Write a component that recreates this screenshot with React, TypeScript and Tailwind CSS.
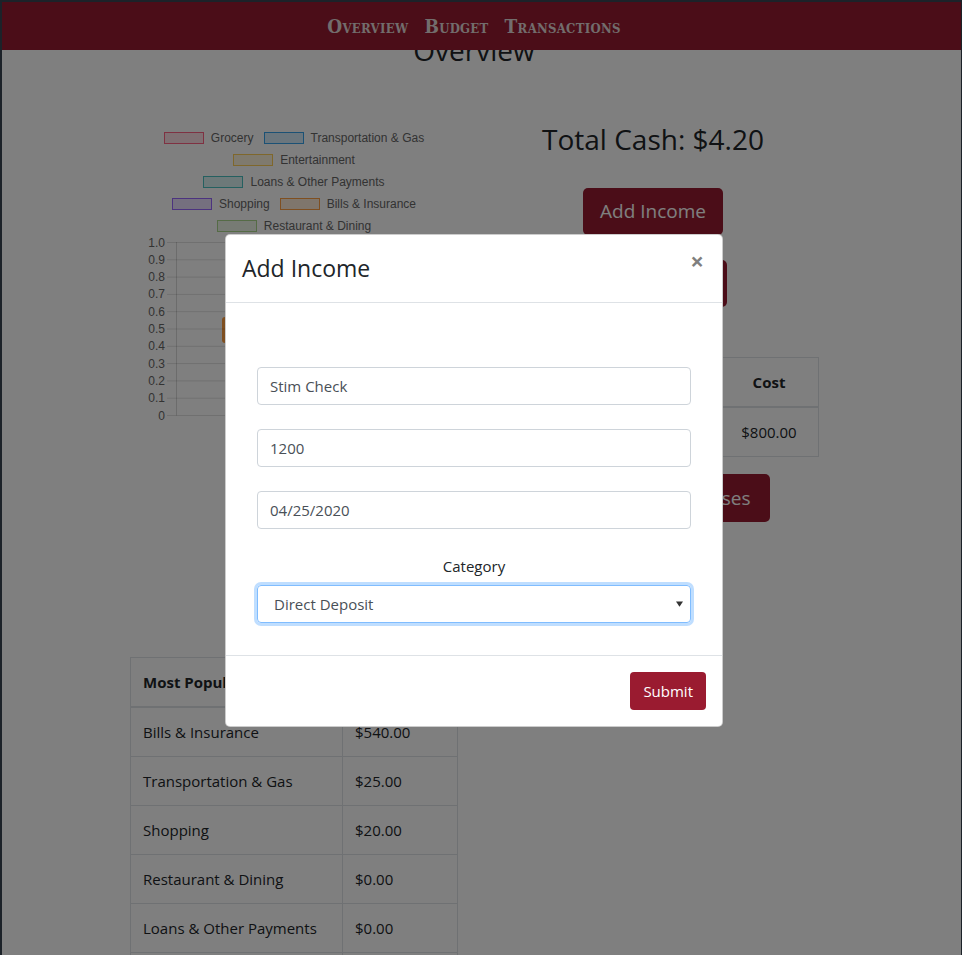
import React from "react";

const legendRows: { label: string; border: string; fill: string }[][] = [
  [
    { label: "Grocery", border: "border-[rgb(255,99,132)]", fill: "bg-[rgba(255,99,132,0.2)]" },
    { label: "Transportation & Gas", border: "border-[rgb(54,162,235)]", fill: "bg-[rgba(54,162,235,0.2)]" },
  ],
  [{ label: "Entertainment", border: "border-[rgb(255,206,86)]", fill: "bg-[rgba(255,206,86,0.2)]" }],
  [{ label: "Loans & Other Payments", border: "border-[rgb(75,192,192)]", fill: "bg-[rgba(75,192,192,0.2)]" }],
  [
    { label: "Shopping", border: "border-[rgb(153,102,255)]", fill: "bg-[rgba(153,102,255,0.2)]" },
    { label: "Bills & Insurance", border: "border-[rgb(255,159,64)]", fill: "bg-[rgba(255,159,64,0.2)]" },
  ],
  [{ label: "Restaurant & Dining", border: "border-[rgb(170,215,140)]", fill: "bg-[rgba(170,215,140,0.2)]" }],
];

const popular = [
  ["Bills & Insurance", "$540.00"],
  ["Transportation & Gas", "$25.00"],
  ["Shopping", "$20.00"],
  ["Restaurant & Dining", "$0.00"],
  ["Loans & Other Payments", "$0.00"],
  ["Entertainment", "$0.00"],
];

function Chart() {
  const labels = ["1.0", "0.9", "0.8", "0.7", "0.6", "0.5", "0.4", "0.3", "0.2", "0.1", "0"];
  return (
    <svg width="328" height="190" viewBox="0 0 328 190" className="block">
      <rect x="92" y="80" width="22" height="26" rx="3" fill="#ff9f40" />
      {labels.map((l, i) => {
        const y = 5.5 + i * 17.3;
        return (
          <g key={l}>
            <line x1="37" x2="328" y1={y} y2={y} stroke="rgba(0,0,0,0.12)" strokeWidth="1" />
            <text
              x="35"
              y={y + 4}
              textAnchor="end"
              fontSize="12"
              fill="#666"
              fontFamily="'Liberation Sans', Arial, sans-serif"
            >
              {l}
            </text>
          </g>
        );
      })}
      <line x1="46.5" x2="46.5" y1="5" y2="178.5" stroke="rgba(0,0,0,0.15)" strokeWidth="1" />
    </svg>
  );
}

export default function App() {
  return (
    <div className="relative h-[955px] w-[962px] overflow-hidden border-t-2 border-l-2 border-r border-[#1c2229] bg-white font-['Open_Sans',sans-serif] text-[#212529]">
      {/* page content */}
      <div className="w-[944px]">
        <h1 className="pt-[31px] text-center text-[28px] leading-[34px] font-normal text-[#212529]">Overview</h1>
        <div className="mt-[43px] flex">
          {/* left column */}
          <div className="ml-[128px] w-[328px] pt-[17px]">
            <div className="flex flex-col items-center font-['Liberation_Sans',Arial,sans-serif] text-[12px] text-[#666]">
              {legendRows.map((row, ri) => (
                <div key={ri} className="flex h-[22px] items-center gap-[10px]">
                  {row.map((it) => (
                    <div key={it.label} className="flex items-center gap-[7px]">
                      <span className={`block h-[12px] w-[40px] border-[1.5px] ${it.border} ${it.fill}`} />
                      <span>{it.label}</span>
                    </div>
                  ))}
                </div>
              ))}
            </div>
            <Chart />
            <table className="mt-[230px] w-[328px] border-collapse text-[15px] leading-[24px]">
              <thead>
                <tr>
                  <th className="w-[212px] border border-b-2 border-[#dee2e6] px-[12px] py-[12px] text-left font-bold whitespace-nowrap">
                    Most Popular Categories
                  </th>
                  <th className="border border-b-2 border-[#dee2e6] px-[12px] py-[12px] text-left font-bold">Total</th>
                </tr>
              </thead>
              <tbody>
                {popular.map(([c, v]) => (
                  <tr key={c}>
                    <td className="border border-[#dee2e6] px-[12px] py-[12px]">{c}</td>
                    <td className="border border-[#dee2e6] px-[12px] py-[12px]">{v}</td>
                  </tr>
                ))}
              </tbody>
            </table>
          </div>
          {/* right column */}
          <div className="flex w-[390px] flex-col items-center pt-[12px]">
            <h2 className="text-[28px] leading-[34px] font-medium">Total Cash: $4.20</h2>
            <button className="mt-[32px] h-[47px] rounded-[5px] bg-[#971b30] px-[17px] text-[19px] text-white">Add Income</button>
            <button className="mt-[25px] h-[47px] w-[148px] rounded-[5px] bg-[#971b30] px-[16px] text-[19px] text-white">Add Expense</button>
            <table className="mt-[50px] w-[332px] border-collapse text-[15px] leading-[24px]">
              <thead>
                <tr>
                  <th className="border border-b-2 border-[#dee2e6] px-[12px] py-[12px] font-bold">Name</th>
                  <th className="border border-b-2 border-[#dee2e6] px-[12px] py-[12px] font-bold">Date</th>
                  <th className="w-[99px] border border-b-2 border-[#dee2e6] px-[12px] py-[12px] font-bold">Cost</th>
                </tr>
              </thead>
              <tbody>
                <tr>
                  <td className="border border-[#dee2e6] px-[12px] py-[12px] text-center">Rent</td>
                  <td className="border border-[#dee2e6] px-[12px] py-[12px] text-center">04/01/2020</td>
                  <td className="border border-[#dee2e6] px-[12px] py-[12px] text-center">$800.00</td>
                </tr>
              </tbody>
            </table>
            <button className="mt-[17px] h-[48px] w-[234px] rounded-[5px] bg-[#971b30] px-[16px] text-[19px] text-white">
              View Recent Expenses
            </button>
          </div>
        </div>
      </div>

      {/* fixed navbar */}
      <nav className="absolute top-0 left-0 flex h-[48px] w-full items-center justify-center gap-[16px] bg-[#971b30] pr-[15px] font-['DejaVu_Serif',serif] text-[19px] font-bold tracking-[0.3px] [font-stretch:condensed] text-[#e4dada] [font-variant:small-caps]">
        <span>Overview</span>
        <span>Budget</span>
        <span>Transactions</span>
      </nav>

      {/* modal backdrop */}
      <div className="absolute inset-0 bg-black/50" />

      {/* modal */}
      <div className="absolute top-[232px] left-[223px] w-[498px] rounded-[5px] border border-black/20 bg-white">
        <div className="flex items-start justify-between border-b border-[#dee2e6] px-[16px] py-[16px]">
          <h5 className="text-[23px] leading-[35px] font-normal text-[#212529]">Add Income</h5>
          <span className="mt-[-2px] mr-[2px] text-[24px] leading-[24px] font-bold text-black/50">×</span>
        </div>
        <div className="px-[31px] pt-[64px] pb-[32px]">
          <div className="flex h-[38px] items-center rounded-[4px] border border-[#ced4da] px-[12px] text-[15px] text-[#495057]">
            Stim Check
          </div>
          <div className="mt-[24px] flex h-[38px] items-center rounded-[4px] border border-[#ced4da] px-[12px] text-[15px] text-[#495057]">
            1200
          </div>
          <div className="mt-[24px] flex h-[38px] items-center rounded-[4px] border border-[#ced4da] px-[12px] text-[15px] text-[#495057]">
            04/25/2020
          </div>
          <div className="mt-[25px] text-center text-[15px] leading-[24px] text-[#212529]">Category</div>
          <div className="mt-[7px] flex h-[38px] items-center justify-between rounded-[4px] border border-[#80bdff] pr-[7px] pl-[16px] text-[15px] text-[#495057] shadow-[0_0_0_3px_rgba(0,123,255,0.25)]">
            <span>Direct Deposit</span>
            <svg width="7" height="6" viewBox="0 0 8 6">
              <path d="M0 0 L8 0 L4 6 Z" fill="#333" />
            </svg>
          </div>
        </div>
        <div className="flex justify-end border-t border-[#dee2e6] px-[16px] py-[16px]">
          <button className="h-[38px] rounded-[4px] bg-[#9a1b30] px-[13px] text-[15px] text-white">Submit</button>
        </div>
      </div>
    </div>
  );
}
